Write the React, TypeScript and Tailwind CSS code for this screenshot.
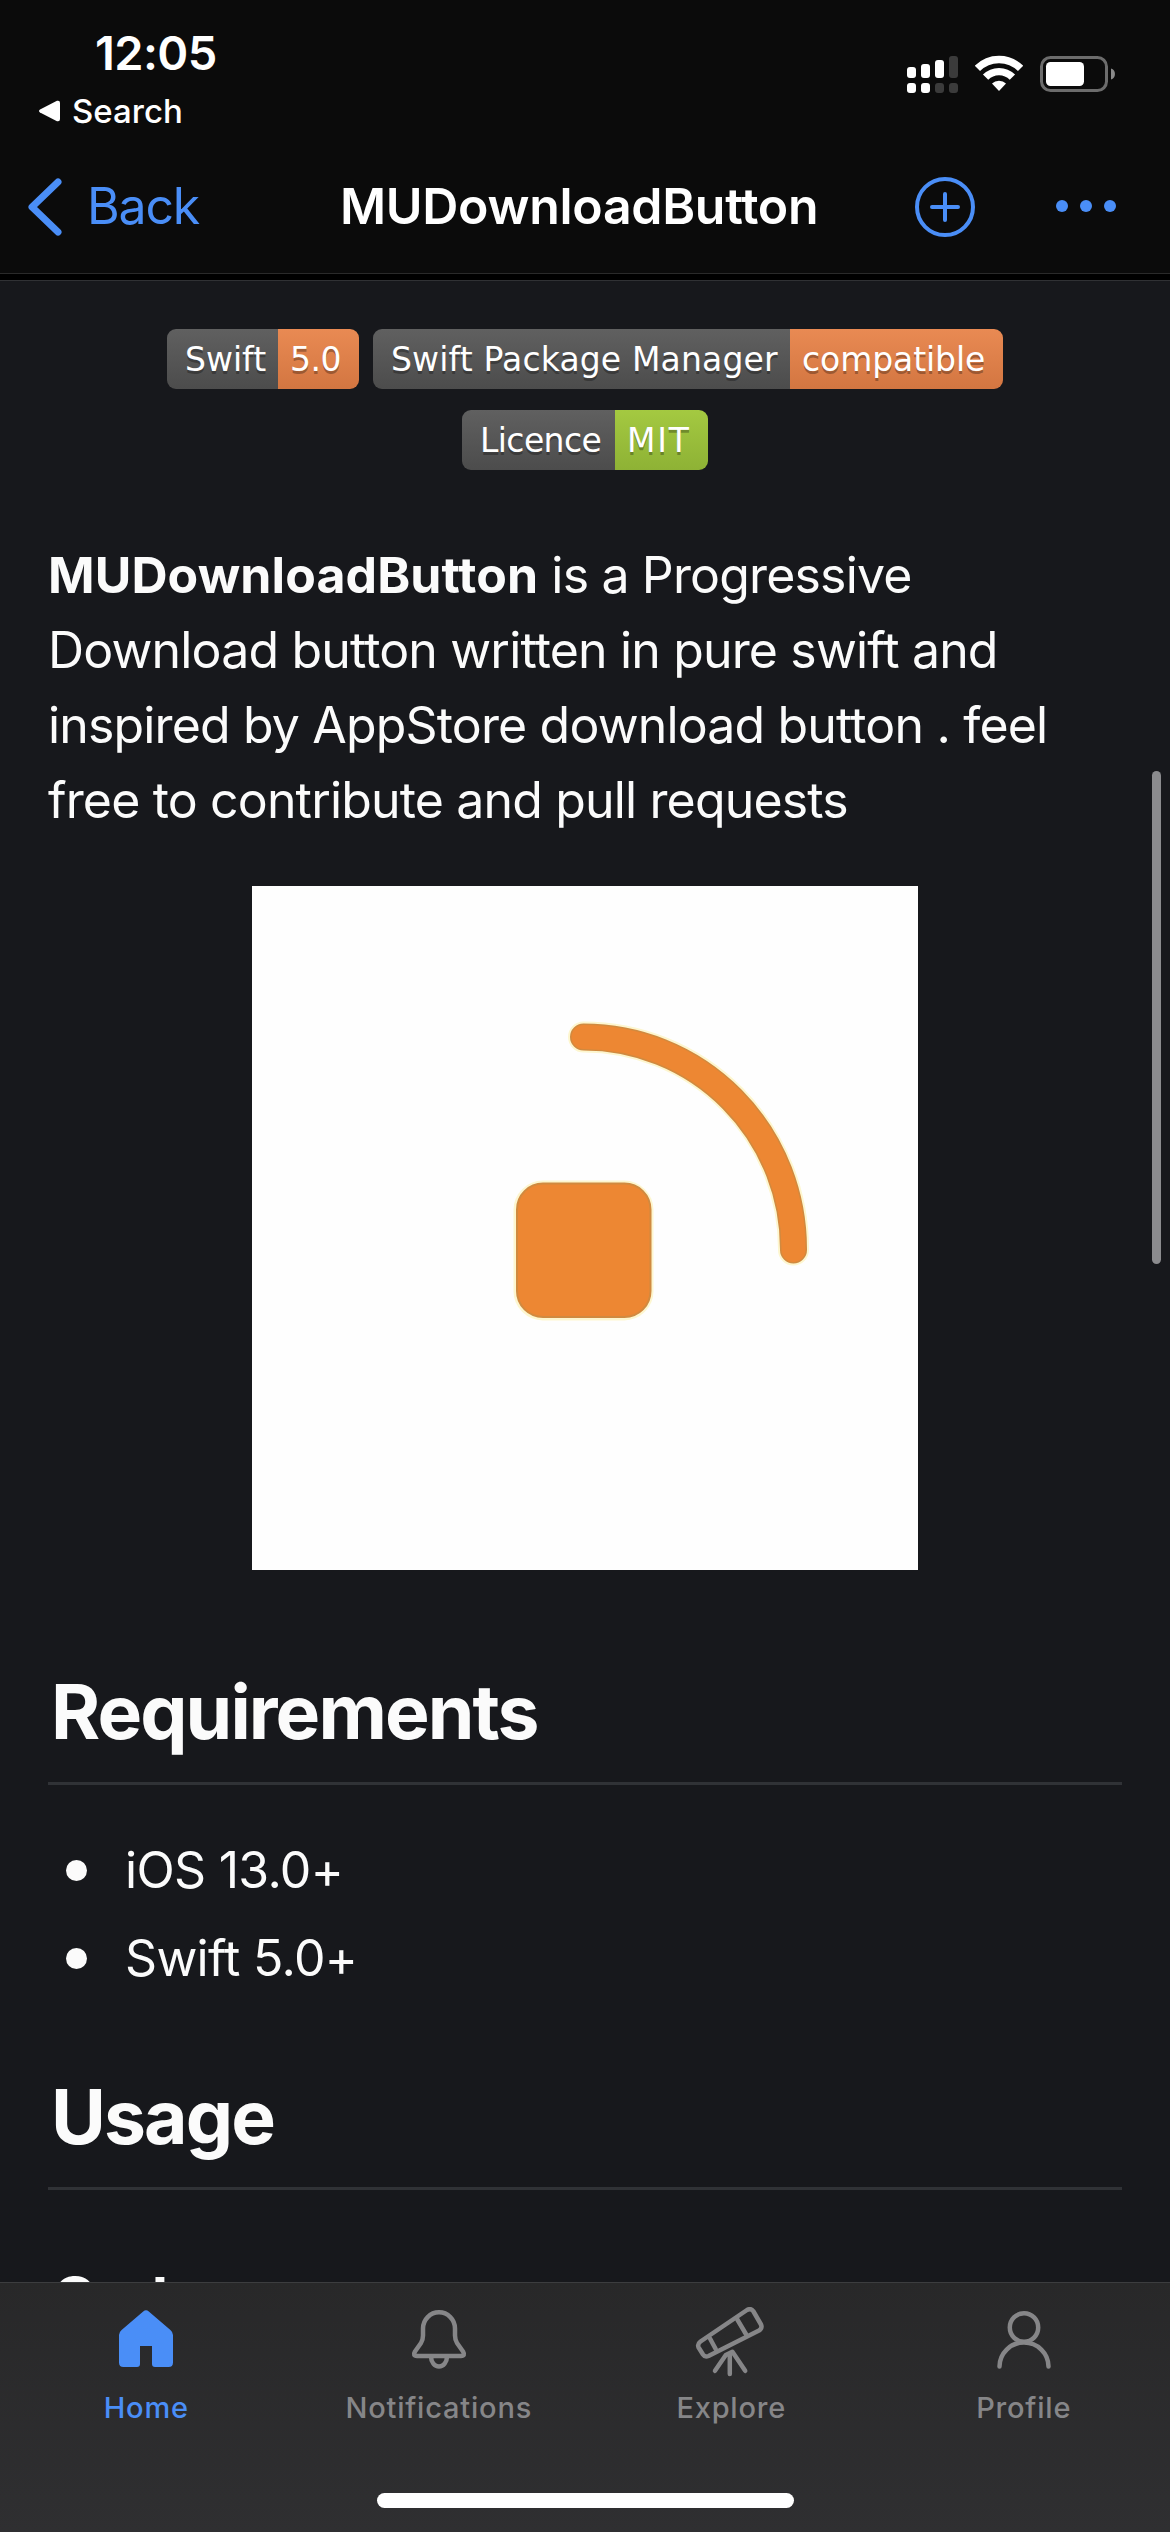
import React from "react";

const SignalIcon = () => (
  <svg width="52" height="38" viewBox="0 0 52 38" fill="#fff">
    <rect x="0" y="12" width="9" height="11" rx="3" />
    <rect x="14" y="9" width="9" height="14" rx="3" />
    <rect x="28" y="5" width="9" height="18" rx="3" />
    <rect x="42" y="1" width="9" height="22" rx="3" fill="#3b3b3b" />
    <rect x="0" y="28" width="9" height="10" rx="3" />
    <rect x="14" y="28" width="9" height="10" rx="3" />
    <rect x="28" y="28" width="9" height="10" rx="3" fill="#3b3b3b" />
    <rect x="42" y="28" width="9" height="10" rx="3" fill="#3b3b3b" />
  </svg>
);

const WifiIcon = () => (
  <svg width="48" height="36" viewBox="0 0 48 36">
    <g fill="none" stroke="#fff" strokeWidth="7.4">
      <path d="M2.4 13.4 A30.5 30.5 0 0 1 45.6 13.4" />
      <path d="M10.6 22.2 A18.8 18.8 0 0 1 37.4 22.2" />
    </g>
    <path d="M24 36 L17 28.6 A9.9 9.9 0 0 1 31 28.6 Z" fill="#fff" />
  </svg>
);

const BatteryIcon = () => (
  <svg width="76" height="36" viewBox="0 0 76 36">
    <rect x="1.5" y="1.5" width="65" height="33" rx="9" fill="none" stroke="#6c6c6c" strokeWidth="3" />
    <rect x="6" y="6" width="38" height="24" rx="4.5" fill="#fff" />
    <path d="M71 12.5 A5.8 5.8 0 0 1 71 23.5 Z" fill="#8a8a8a" />
  </svg>
);

const HomeIcon = () => (
  <svg width="72" height="72" viewBox="0 0 72 72" fill="#4a8ef7">
    <path d="M33.2 4.6 Q36 2 38.8 4.6 L60.4 23 Q63 25.2 63 28 V55.5 Q63 60 58.5 60 H45 Q42 60 42 57 V39 H30 V57 Q30 60 27 60 H13.5 Q9 60 9 55.5 V28 Q9 25.2 11.6 23 Z" />
  </svg>
);

const BellIcon = () => (
  <svg width="72" height="72" viewBox="0 0 72 72" fill="none" stroke="#868688" strokeWidth="4.5" strokeLinejoin="round">
    <path d="M20 21.5 A16 16.2 0 0 1 52 21.5 V28.5 Q52 32.5 54 36 L60 44.5 Q62.6 49 58 49 H14 Q9.4 49 12 44.5 L18 36 Q20 32.5 20 28.5 Z" />
    <path d="M28 49.5 A8 10 0 0 0 44 49.5" />
  </svg>
);

const TelescopeIcon = () => (
  <svg width="72" height="72" viewBox="0 0 72 72" fill="none" stroke="#868688" strokeWidth="4.5" strokeLinejoin="round" strokeLinecap="round">
    <path d="M5.5 34.5 L52 3 Q56 1 58.2 4 L66 17.5 Q67.6 21.2 64 23.5 L13.5 49 Q10 50.5 8 47.5 L3.6 40.5 Q2.1 37 5.5 34.5 Z" />
    <path d="M15 31.5 L20.8 42.3 M42.3 12.5 L51.2 27.5 M34.8 48 V67 M20 63.8 L30.8 48 L37.4 44.8 L50.2 63.8" />
  </svg>
);

const ProfileIcon = () => (
  <svg width="72" height="72" viewBox="0 0 72 72" fill="none" stroke="#868688" strokeWidth="4.5" strokeLinecap="round">
    <circle cx="36" cy="20.5" r="14.2" />
    <path d="M11.5 59.5 A24.5 24 0 0 1 60.5 59.5" />
  </svg>
);

const tabs = [
  { label: "Home", Icon: HomeIcon, active: true },
  { label: "Notifications", Icon: BellIcon, active: false },
  { label: "Explore", Icon: TelescopeIcon, active: false },
  { label: "Profile", Icon: ProfileIcon, active: false },
];

type BadgeProps = { left: string; right: string; leftClass: string; rightClass: string };

const Badge = ({ left, right, leftClass, rightClass }: BadgeProps) => (
  <div className="flex h-[60px] overflow-hidden whitespace-nowrap rounded-[9px] font-['DejaVu_Sans'] text-[33px] leading-[62px] text-white [text-shadow:0_3px_0_rgba(1,1,1,0.3)]">
    <div className={"bg-linear-to-b from-[#606060] to-[#4c4c4c] " + leftClass}>{left}</div>
    <div className={"bg-linear-to-b " + rightClass}>{right}</div>
  </div>
);

const SectionHeading = ({ children }: { children: React.ReactNode }) => (
  <h2 className="h-[122px] border-b-[3px] border-[#303236] pl-[3px] text-[75px] font-[650] leading-[98px] tracking-[-1.9px]">
    {children}
  </h2>
);

export default function App() {
  return (
    <div className="flex h-[2532px] w-[1170px] flex-col overflow-hidden bg-[#17181c] font-['Inter',sans-serif] text-[#fbfbfb]">
      <header className="flex h-[274px] shrink-0 flex-col border-b border-[#2a2a2a] bg-[#0b0b0b] text-white">
        <div className="flex h-[140px] justify-between pl-[38px] pr-[54px]">
          <div className="flex flex-col">
            <div className="mt-[23px] h-[60px] pl-[57px] text-[47px] font-semibold leading-[60px] tracking-[-0.6px]">12:05</div>
            <div className="mt-[8px] flex h-[40px] items-center gap-[12px] text-[33px] font-medium leading-[40px]">
              <svg width="22" height="22" viewBox="0 0 22 22" fill="#fff">
                <path d="M2 9.5 L19 0.8 Q22 0 22 3 V19 Q22 22 19 21.2 L2 12.5 Q0 11 2 9.5 Z" />
              </svg>
              Search
            </div>
          </div>
          <div className="mt-[55px] flex h-[38px] items-start">
            <SignalIcon />
            <div className="ml-[16px]"><WifiIcon /></div>
            <div className="ml-[17px] mt-px"><BatteryIcon /></div>
          </div>
        </div>
        <div className="flex h-[133px] items-center">
          <div className="flex w-[343px] items-center pl-[27px] text-[50px] text-[#4a8ef7]">
            <svg width="36" height="60" viewBox="0 0 36 60" fill="none" stroke="#4a8ef7" strokeWidth="7" strokeLinecap="round" strokeLinejoin="round">
              <path d="M31 5 L5 30 L31 55" />
            </svg>
            <span className="ml-[24px] tracking-[-1.2px]">Back</span>
          </div>
          <h1 className="-ml-[3px] w-[575px] whitespace-nowrap text-[50px] font-semibold tracking-[-0.3px]">MUDownloadButton</h1>
          <svg width="60" height="60" viewBox="0 0 60 60" fill="none" stroke="#4a8ef7" strokeWidth="4" strokeLinecap="round">
            <circle cx="30" cy="30" r="28" />
            <path d="M30 17 V43 M17 30 H43" />
          </svg>
          <svg className="mb-[2px] ml-[81px]" width="60" height="12" viewBox="0 0 60 12" fill="#4a8ef7">
            <circle cx="6" cy="6" r="6" />
            <circle cx="30" cy="6" r="6" />
            <circle cx="54" cy="6" r="6" />
          </svg>
        </div>
      </header>
      <div className="h-[7px] shrink-0 border-b border-[#303134] bg-black" />

      <main className="relative flex min-h-0 flex-1 flex-col overflow-hidden px-[48px] pt-[48px]">
        <div className="flex justify-center gap-[14px]">
          <Badge left="Swift" right="5.0" leftClass="w-[111px] pl-[18px]" rightClass="w-[81px] pl-[12px] tracking-[-0.5px] from-[#e98a53] to-[#d37641]" />
          <Badge left="Swift Package Manager" right="compatible" leftClass="w-[417px] pl-[18px] tracking-[0.15px]" rightClass="w-[213px] pl-[12px] tracking-[-0.1px] from-[#e98a53] to-[#d37641]" />
        </div>
        <div className="mt-[21px] flex justify-center">
          <Badge left="Licence" right="MIT" leftClass="w-[153px] pl-[18px] tracking-[-0.6px]" rightClass="w-[93px] pl-[12px] tracking-[1.8px] from-[#a4c941] to-[#8eb235]" />
        </div>
        <p className="mt-[68px] whitespace-nowrap text-[50px] leading-[75px] tracking-[-0.84px]">
          <strong className="font-bold tracking-[0.1px]">MUDownloadButton</strong> is a Progressive
          <br />
          Download button written in pure swift and
          <br />
          inspired by AppStore download button . feel
          <br />
          free to contribute and pull requests
        </p>
        <svg className="ml-[204px] mt-[48px] shrink-0 bg-[#fefefe]" width="666" height="684" viewBox="252 887 666 684">
          <g stroke="#fdf6cf" fill="none" strokeLinecap="round">
            <rect x="516" y="1184" width="135" height="135" rx="27" strokeWidth="5" />
            <path d="M583.5 1038 A210 212 0 0 1 793.5 1251" strokeWidth="31" />
          </g>
          <rect x="517" y="1184.5" width="133.5" height="133.5" rx="26" fill="#ed8733" stroke="#d08a40" strokeWidth="2" />
          <path d="M583.5 1038 A210 212 0 0 1 793.5 1251" fill="none" stroke="#d08a40" strokeWidth="27" strokeLinecap="round" />
          <path d="M583.5 1038 A210 212 0 0 1 793.5 1251" fill="none" stroke="#ed8733" strokeWidth="24" strokeLinecap="round" />
        </svg>
        <div className="mt-[93px] shrink-0"><SectionHeading>Requirements</SectionHeading></div>
        <ul className="mt-[41px] flex shrink-0 flex-col text-[50px] leading-[88px]">
          {["iOS 13.0+", "Swift 5.0+"].map((item) => (
            <li key={item} className="flex h-[88px] items-center pl-[18px] tracking-[-0.7px]">
              <span className="mr-[38px] size-[21px] rounded-full bg-[#fbfbfb]" />
              {item}
            </li>
          ))}
        </ul>
        <div className="mt-[66px] shrink-0"><SectionHeading>Usage</SectionHeading></div>
        <h3 className="mt-[71px] shrink-0 pl-[4px] text-[60px] font-[650] leading-[76px] tracking-[-1.5px]">Code</h3>
        <div className="absolute left-[1152px] top-[490px] h-[493px] w-[9px] rounded-full bg-[#8b8b8e]" />
      </main>

      <nav className="flex h-[250px] shrink-0 flex-col border-t border-[#3c3d3f] bg-linear-to-b from-[#282829] to-[#2f2f31]">
        <div className="grid h-[210px] grid-cols-4">
          {tabs.map(({ label, Icon, active }) => (
            <div key={label} className={active ? "flex flex-col items-center pt-[24px] text-[#4a8ef7]" : "flex flex-col items-center pt-[24px] text-[#868688]"}>
              <Icon />
              <span className="mt-[9px] text-[29px] font-medium leading-[40px] tracking-[0.8px]">{label}</span>
            </div>
          ))}
        </div>
        <div className="mx-auto h-[15px] w-[417px] rounded-full bg-white" />
      </nav>
    </div>
  );
}
